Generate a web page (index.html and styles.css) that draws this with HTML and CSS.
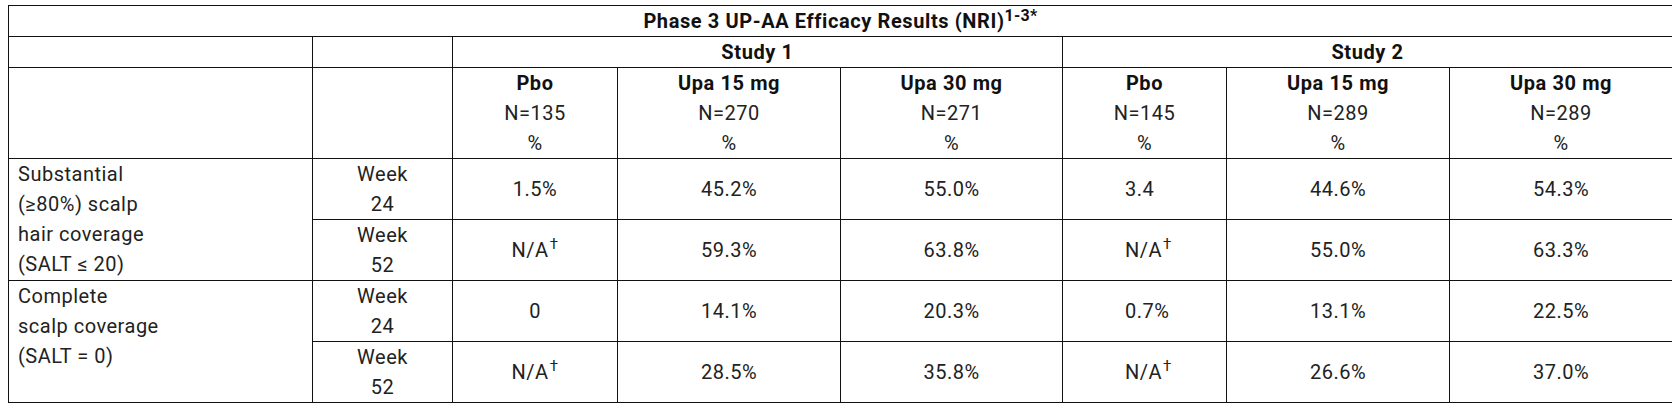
FILE: index.html
```html
<!DOCTYPE html>
<html lang="en">
<head>
<meta charset="utf-8">
<title>Phase 3 UP-AA Efficacy Results</title>
<link rel="stylesheet" href="styles.css">
</head>
<body>
<table class="results">
  <colgroup>
    <col class="c-label">
    <col class="c-week">
    <col class="c-pbo1">
    <col class="c-wide">
    <col class="c-wide2">
    <col class="c-pbo2">
    <col class="c-wide">
    <col class="c-wide">
  </colgroup>
  <thead>
    <tr class="row-title">
      <th colspan="8" class="title">Phase 3 UP-AA Efficacy Results (NRI)<sup class="sup-title">1-3*</sup></th>
    </tr>
    <tr class="row-study">
      <th></th>
      <th></th>
      <th colspan="3" class="study">Study 1</th>
      <th colspan="3" class="study">Study 2</th>
    </tr>
    <tr class="row-arms">
      <th></th>
      <th></th>
      <th class="arm"><b>Pbo</b><br>N=135<br>%</th>
      <th class="arm"><b>Upa 15 mg</b><br>N=270<br>%</th>
      <th class="arm"><b>Upa 30 mg</b><br>N=271<br>%</th>
      <th class="arm"><b>Pbo</b><br>N=145<br>%</th>
      <th class="arm"><b>Upa 15 mg</b><br>N=289<br>%</th>
      <th class="arm"><b>Upa 30 mg</b><br>N=289<br>%</th>
    </tr>
  </thead>
  <tbody>
    <tr>
      <td rowspan="2" class="label">Substantial<br>(≥80%) scalp<br>hair coverage<br>(SALT ≤ 20)</td>
      <td class="week">Week<br>24</td>
      <td class="val">1.5%</td>
      <td class="val">45.2%</td>
      <td class="val">55.0%</td>
      <td class="val left">3.4</td>
      <td class="val">44.6%</td>
      <td class="val">54.3%</td>
    </tr>
    <tr>
      <td class="week">Week<br>52</td>
      <td class="val">N/A<sup class="dag">†</sup></td>
      <td class="val">59.3%</td>
      <td class="val">63.8%</td>
      <td class="val left">N/A<sup class="dag">†</sup></td>
      <td class="val">55.0%</td>
      <td class="val">63.3%</td>
    </tr>
    <tr>
      <td rowspan="2" class="label">Complete<br>scalp coverage<br>(SALT = 0)</td>
      <td class="week">Week<br>24</td>
      <td class="val">0</td>
      <td class="val">14.1%</td>
      <td class="val">20.3%</td>
      <td class="val left">0.7%</td>
      <td class="val">13.1%</td>
      <td class="val">22.5%</td>
    </tr>
    <tr>
      <td class="week">Week<br>52</td>
      <td class="val">N/A<sup class="dag">†</sup></td>
      <td class="val">28.5%</td>
      <td class="val">35.8%</td>
      <td class="val left">N/A<sup class="dag">†</sup></td>
      <td class="val">26.6%</td>
      <td class="val">37.0%</td>
    </tr>
  </tbody>
</table>
</body>
</html>
```
FILE: styles.css
```css
html, body {
  background: #ffffff;
}
body {
  margin: 5px 8px;
  font-family: Roboto, "Liberation Sans", sans-serif;
  font-size: 20px;
  font-weight: 400;
  letter-spacing: 0.5px;
  color: #222;
}
.results {
  border-collapse: collapse;
  table-layout: fixed;
  width: 1665px;
}
.c-label { width: 304px; }
.c-week { width: 140px; }
.c-pbo1 { width: 165px; }
.c-wide { width: 223px; }
.c-wide2 { width: 222px; }
.c-pbo2 { width: 164px; }
.results th,
.results td {
  border: 1px solid #111;
  padding: 0;
  line-height: 30px;
  text-align: center;
  vertical-align: middle;
  font-weight: 400;
}
.results b {
  font-weight: 700;
  letter-spacing: 0.6px;
  color: #111;
}
.results .title,
.results .study {
  font-weight: 700;
  letter-spacing: 0.6px;
  color: #111;
}
.sup-title {
  font-size: 16px;
  letter-spacing: 0.3px;
  line-height: 0;
  vertical-align: 7px;
}
.dag {
  font-size: 15px;
  line-height: 0;
  vertical-align: 8px;
  margin-left: 1px;
}
.results td.label {
  text-align: left;
  vertical-align: top;
  padding-left: 9px;
}
.results td.left {
  text-align: left;
  padding-left: 62px;
}
```
